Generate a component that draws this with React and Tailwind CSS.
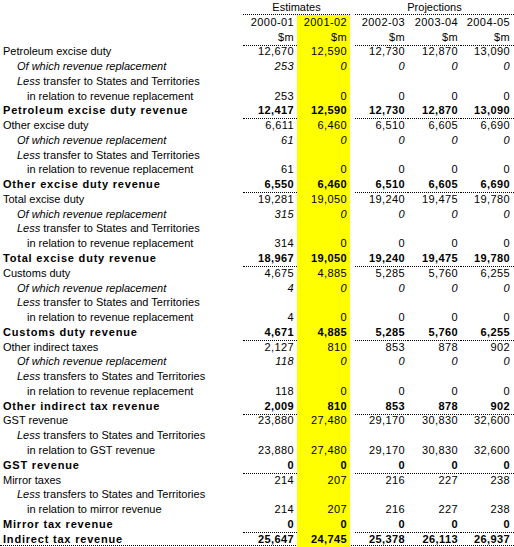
import React from 'react';

const YEARS = ['2000-01', '2001-02', '2002-03', '2003-04', '2004-05'];

const sections = [
  {
    name: 'Petroleum excise duty',
    total: 'Petroleum excise duty revenue',
    gross: ['12,670', '12,590', '12,730', '12,870', '13,090'],
    ofWhich: ['253', '0', '0', '0', '0'],
    less: 'transfer to States and Territories',
    rel: 'in relation to revenue replacement',
    relVals: ['253', '0', '0', '0', '0'],
    net: ['12,417', '12,590', '12,730', '12,870', '13,090'],
  },
  {
    name: 'Other excise duty',
    total: 'Other excise duty revenue',
    gross: ['6,611', '6,460', '6,510', '6,605', '6,690'],
    ofWhich: ['61', '0', '0', '0', '0'],
    less: 'transfer to States and Territories',
    rel: 'in relation to revenue replacement',
    relVals: ['61', '0', '0', '0', '0'],
    net: ['6,550', '6,460', '6,510', '6,605', '6,690'],
  },
  {
    name: 'Total excise duty',
    total: 'Total excise duty revenue',
    gross: ['19,281', '19,050', '19,240', '19,475', '19,780'],
    ofWhich: ['315', '0', '0', '0', '0'],
    less: 'transfer to States and Territories',
    rel: 'in relation to revenue replacement',
    relVals: ['314', '0', '0', '0', '0'],
    net: ['18,967', '19,050', '19,240', '19,475', '19,780'],
  },
  {
    name: 'Customs duty',
    total: 'Customs duty revenue',
    gross: ['4,675', '4,885', '5,285', '5,760', '6,255'],
    ofWhich: ['4', '0', '0', '0', '0'],
    less: 'transfer to States and Territories',
    rel: 'in relation to revenue replacement',
    relVals: ['4', '0', '0', '0', '0'],
    net: ['4,671', '4,885', '5,285', '5,760', '6,255'],
  },
  {
    name: 'Other indirect taxes',
    total: 'Other indirect tax revenue',
    gross: ['2,127', '810', '853', '878', '902'],
    ofWhich: ['118', '0', '0', '0', '0'],
    less: 'transfers to States and Territories',
    rel: 'in relation to revenue replacement',
    relVals: ['118', '0', '0', '0', '0'],
    net: ['2,009', '810', '853', '878', '902'],
  },
  {
    name: 'GST revenue',
    total: 'GST revenue',
    gross: ['23,880', '27,480', '29,170', '30,830', '32,600'],
    less: 'transfers to States and Territories',
    rel: 'in relation to GST revenue',
    relVals: ['23,880', '27,480', '29,170', '30,830', '32,600'],
    net: ['0', '0', '0', '0', '0'],
  },
  {
    name: 'Mirror taxes',
    total: 'Mirror tax revenue',
    gross: ['214', '207', '216', '227', '238'],
    less: 'transfers to States and Territories',
    rel: 'in relation to mirror revenue',
    relVals: ['214', '207', '216', '227', '238'],
    net: ['0', '0', '0', '0', '0'],
  },
];

const empty = ['', '', '', '', ''];

// one row of the table: label + 2 estimate cols + gap + 3 projection cols
const Row = ({ label, vals, bold, italic, line, fullLine, indent = 0 }) => {
  const numCls = `text-right pr-[3px] tracking-[0.4px] ${line ? 'border-b border-dotted border-black' : ''}`;
  const pad = indent === 2 ? 'pl-[27px]' : indent === 1 ? 'pl-[17px]' : 'pl-[3px]';
  return (
    <div
      className={`grid grid-cols-[243px_54px_53px_5px_53px_53px_53px] h-[14.78px] leading-[15px] ${
        bold ? 'font-bold' : ''
      } ${italic ? 'italic' : ''} ${fullLine ? 'border-b border-dotted border-black' : ''}`}
    >
      <div className={`${pad} whitespace-nowrap ${bold ? 'tracking-[0.8px]' : ''}`}>{label}</div>
      <div className={numCls}>{vals[0]}</div>
      <div className={`${numCls} bg-[#ffff00] pr-[2px]`}>{vals[1]}</div>
      <div></div>
      <div className={numCls}>{vals[2]}</div>
      <div className={numCls}>{vals[3]}</div>
      <div className={`${numCls} pr-[4px]`}>{vals[4]}</div>
    </div>
  );
};

export default function App() {
  return (
    <div className="w-[514px] h-[547px] bg-white text-black text-[11px] font-['Liberation_Sans',Arial,sans-serif] overflow-hidden">
      <div className="grid grid-cols-[243px_107px_5px_159px] h-[14.78px] leading-[14px]">
        <div></div>
        <div className="text-center border-b border-dotted border-black">Estimates</div>
        <div></div>
        <div className="text-center border-b border-dotted border-black">Projections</div>
      </div>
      <Row label="" vals={YEARS} />
      <Row label="" vals={['$m', '$m', '$m', '$m', '$m']} line />
      {sections.map((s) => (
        <React.Fragment key={s.name}>
          <Row label={s.name} vals={s.gross} />
          {s.ofWhich && (
            <Row label="Of which revenue replacement" vals={s.ofWhich} italic indent={1} />
          )}
          <Row
            label={
              <>
                <span className="italic">Less</span> {s.less}
              </>
            }
            vals={empty}
            indent={1}
          />
          <Row label={s.rel} vals={s.relVals} indent={2} />
          <Row label={s.total} vals={s.net} bold line />
        </React.Fragment>
      ))}
      <Row
        label="Indirect tax revenue"
        vals={['25,647', '24,745', '25,378', '26,113', '26,937']}
        bold
        fullLine
      />
    </div>
  );
}
